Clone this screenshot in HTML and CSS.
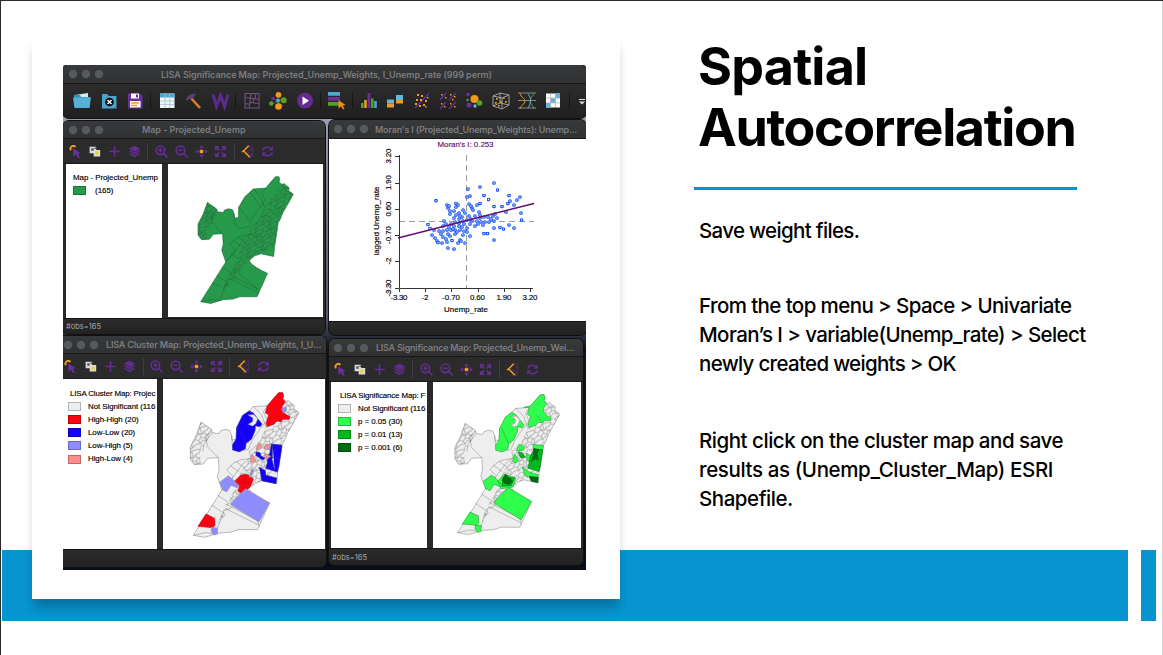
FILE: index.html
```html
<!DOCTYPE html>
<html lang="en">
<head>
<meta charset="utf-8">
<title>Spatial Autocorrelation</title>
<link rel="stylesheet" href="styles.css">
</head>
<body>
<svg class="defs" width="0" height="0" aria-hidden="true">
  <defs>
    <pattern id="tracts" width="46" height="42" patternUnits="userSpaceOnUse" patternTransform="rotate(-28) scale(1.2)">
      <path class="mesh" d="M0 5l9 3 7-6 8 5 10-4 12 2M0 16l7-3 8 5 9-4 7 6 8-5 7 1M0 27l10-3 6 6 9-4 8 5 6-6 7 2M0 37l8-2 9 4 8-5 9 5 12-2M9 8l-2 5M24 7l0 7M34 3l-3 13 2 4M15 18l-5 6M24 14l3 8-2 4M16 30l1 9M33 31l1 8M39 25l-1-9M43 27l-3 11"/>
    </pattern>
    <path id="outline" d="M296 38L308 38 311 48 308 56 318 64 326 62 335 70 343 76 341 86 357 98 345 120 322 160 312 185 305 196 303 215 296 260 293 276 290 311 265 306 245 302 222 310 206 326 215 338 231 349 250 360 269 369 233 449 174 449 151 457 117 459 74 472 40 466 126 330 112 290 117 269 115 233 83 235 70 252 43 254 31 238 31 200 49 166 63 126 95 149 97 158 117 161 122 152 135 148 149 151 155 166 156 180 169 178 170 143 191 107 220 80 263 77 282 54Z"/>
    <g id="borders">
      <path stroke="none" fill="url(#tracts)" d="M318 64L343 76 341 86 357 98 322 160 305 196 293 276 245 302 200 330 120 425 108 462 120 410 165 325 180 280 210 235 235 190 258 142 300 90Z"/>
      <path stroke="none" fill="url(#tracts)" d="M63 126L95 149 80 185 60 215 62 252 43 254 31 238 31 200 49 166Z"/>
      <path class="mesh" d="M160 290L126 330M142 300L170 320M95 375L126 396M112 345L145 367M78 402L108 415M126 330L160 290 190 250 212 232M150 352L232 420 237 440M137 372L236 423M135 385L234 434M130 396L120 425 105 462 76 458 40 466M160 290L140 270 160 250 180 240 215 235M150 256L178 276M168 244L194 264M155 166L158 205 175 215 205 208 218 178 245 140 210 92M170 143L195 170 206 190M220 80L245 105 258 142M263 77L250 95 262 120 245 140M95 149L78 170 82 200 115 233M97 158L72 192 68 215M235 192L208 215 212 232"/>
    </g>
    <marker id="ring" markerWidth="4" markerHeight="4" refX="2" refY="2" markerUnits="userSpaceOnUse">
      <circle cx="2" cy="2" r="1.3" fill="#fff" stroke="#0a4cf5" stroke-width="1.1"/>
    </marker>

    <symbol id="select" viewBox="0 0 16 16"><path fill="none" stroke="#f29a1d" stroke-width="2.2" d="M2.500 6.500A3.400 3.400 0 0 1 8 2.500"/><path fill="#6a309c" d="M5 4L14.500 10 10.800 10.700 13.500 15 11.300 16 8.700 11.800 5.500 14.500Z"/></symbol>
    <symbol id="invert" viewBox="0 0 16 16"><path fill="#ddd" d="M2 2h8v8H2zM7 6h8v8H7z"/><path fill="#555" d="M4 4h3v3H4zM8 3h2v2H8z"/><path fill="#e8d52b" d="M9 8h4v4H9z"/></symbol>
    <symbol id="plus" viewBox="0 0 16 16"><path stroke="#642c95" stroke-width="2" d="M8 1.500v13M1.500 8h13"/></symbol>
    <symbol id="layers" viewBox="0 0 16 16"><g fill="#642c95"><path d="M8 1l7 3.600-7 3.600-7-3.600z"/><path d="M1 7.300l2-.8 5 2.800 5-2.800 2 .8-7 4z"/><path d="M1 10.700l2-.8 5 2.800 5-2.800 2 .8-7 4z"/></g></symbol>
    <symbol id="zoomin" viewBox="0 0 16 16"><g fill="none" stroke="#642c95" stroke-width="2"><circle cx="6.700" cy="6.500" r="5.300"/><path d="M10.400 10.200l5 5M4 6.500h5.400M6.700 3.800v5.400"/></g></symbol>
    <symbol id="zoomout" viewBox="0 0 16 16"><g fill="none" stroke="#642c95" stroke-width="2"><circle cx="6.700" cy="6.500" r="5.300"/><path d="M10.400 10.200l5 5M4 6.500h5.400"/></g></symbol>
    <symbol id="pan" viewBox="0 0 16 16"><path fill="#642c95" d="M8 0l3 4H5zM8 16l3-4H5zM0 8l4-3v6zM16 8l-4-3v6z"/><circle cx="8" cy="8" r="2.400" fill="#f29a1d"/></symbol>
    <symbol id="extent" viewBox="0 0 16 16"><path fill="none" stroke="#642c95" stroke-width="1.900" d="M2 6V2.300H6M10 2.300h4V6M14 10v3.700h-4M6 13.700H2V10M2.500 3l4 3.600M13.500 3l-4 3.600M2.500 13l4-3.600M13.500 13l-4-3.600"/></symbol>
    <symbol id="basemap" viewBox="0 0 16 16"><path fill="none" stroke="#54306e" stroke-width=".9" d="M7 1h7v14H7M5 5l9 9M8 1l6 6M14 4l-8 8M14 10l-4 5M10 1L6 5"/><path fill="none" stroke="#f29a1d" stroke-width="1.900" d="M9.500 1L2.500 8H1M3 7l8 8"/></symbol>
    <symbol id="refresh" viewBox="0 0 16 16"><path fill="none" stroke="#642c95" stroke-width="1.900" d="M2 7A6 5.300 0 0 1 12.500 4.700M14 9A6 5.300 0 0 1 3.500 11.300"/><path fill="#642c95" d="M14.700 1.500v5.200H9.500zM1.300 14.500V9.300h5.200z"/></symbol>
    <symbol id="lights" viewBox="0 0 36 10"><g fill="#58595b"><circle cx="5" cy="5" r="4.200"/><circle cx="18" cy="5" r="4.200"/><circle cx="31" cy="5" r="4.200"/></g></symbol>
  </defs>
</svg>

<main class="slide">
  <div class="band"></div>
  <div class="band-end"></div>

  <figure class="card">
    <div class="desktop">
      <section class="win main">
        <header class="titlebar"><svg class="lights"><use href="#lights"/></svg><span class="t-main">LISA Significance Map: Projected_Unemp_Weights, I_Unemp_rate (999 perm)</span></header>
        <div class="bigbar">
          <svg viewBox="0 0 20 20"><path fill="#dbe9ee" d="M3 4l13-2v5H3z"/><path fill="#3c90b8" d="M2 4h6l1 2h9v3H2z"/><path fill="#56b0d8" d="M1 6.500h18L17.500 17H2.500z"/></svg>
          <svg viewBox="0 0 20 20"><path fill="#4aa3cc" d="M3 3h5l2 2h7.500v12.500H3z"/><circle cx="10.500" cy="11" r="4.300" fill="#080808"/><path stroke="#fff" stroke-width="1.500" d="M8.500 9l4 4M12.500 9l-4 4"/></svg>
          <svg viewBox="0 0 20 20"><path fill="#6a2f9b" d="M3 2.500h12l2.500 2.500v12.500H3z"/><path fill="#fff" d="M6 2.500h8v5H6zM5 10h10.500v6.500H5z"/><path fill="#6a2f9b" d="M11 3.500h2v3h-2z"/><path stroke="#f29a1d" stroke-width="1.400" d="M6 12h8M6 14.500h6"/></svg>
          <i></i>
          <svg viewBox="0 0 20 20"><path fill="#f4f4f4" d="M3 2.500h14.500V17H3z"/><path fill="#4aa9d3" d="M3 2.500h14.500v4H3z"/><path stroke="#9fc9d6" stroke-width=".8" d="M3 10h14.500M3 13.500h14.500M8 2.500V17M12.800 2.500V17"/></svg>
          <svg viewBox="0 0 20 20"><path stroke="#dd7b2a" stroke-width="2.600" d="M8 7l9 10"/><path fill="#5c3f78" d="M3 9c1-4 5-7 10-6l-3 4-2 1-1-1-3 3z"/></svg>
          <svg viewBox="0 0 20 20"><path fill="none" stroke="#5c2a8c" stroke-width="3" d="M3 3.500l3.500 12L10.500 4.500l4 11 3.500-12"/></svg>
          <i></i>
          <svg viewBox="0 0 20 20"><path fill="none" stroke="#6c5380" stroke-width="1.100" d="M3 2.500h14V17H3zM3 6.500l14 2M9 2.500L7 17M8 11.500l9 1M12 7.500l-1 5M14 2.500l-1 5M3 12.500l5 1"/></svg>
          <svg viewBox="0 0 20 20"><path stroke="#6a5a50" d="M10 4v12M4 13l12-6M5 7l10 8"/><circle cx="10.500" cy="3.800" r="2.900" fill="#f29a1d"/><circle cx="10.500" cy="15.500" r="3.300" fill="#f29a1d"/><circle cx="15.700" cy="9.300" r="3" fill="#55a51c"/><circle cx="3.300" cy="12.500" r="2.200" fill="#55a51c"/><circle cx="5" cy="7.500" r="1.800" fill="#6a2f9b"/><circle cx="10" cy="9.500" r="1.900" fill="#4aa9d3"/></svg>
          <svg viewBox="0 0 20 20"><circle cx="10" cy="9.700" r="7.900" fill="#642c91"/><path fill="#fff" d="M7.500 5.500l6.500 4.200-6.500 4.200z"/></svg>
          <i></i>
          <svg viewBox="0 0 20 20"><path fill="#4aa9d3" d="M1 1h12v3.800H1z"/><path fill="#6a2f9b" d="M1 6h12v3.800H1z"/><path fill="#55a51c" d="M1 11h12v3.800H1z"/><path fill="#ef8b23" d="M11.500 9l7 5-2.800.7 1.800 3-1.500.8-1.800-3-2.700 2z"/></svg>
          <i></i>
          <svg viewBox="0 0 20 20"><path fill="#55a51c" d="M2 12h2.600v5H2zM12 7.500h2.600V17H12z"/><path fill="#ef9a23" d="M5.200 9h2.600v8H5.200z"/><path fill="#6a2f9b" d="M8.600 2h2.800v15H8.600z"/><path fill="#4aa9d3" d="M15.200 10h2.600v7h-2.600z"/></svg>
          <svg viewBox="0 0 20 20"><path fill="#61b7dc" d="M2 8.500h7v4H2zM11 4h7v5h-7z"/><path fill="#f29a1d" d="M2 12.500h7v4H2zM11 9h7v3.500h-7z"/></svg>
          <svg viewBox="0 0 20 20"><path stroke="#6a2f9b" stroke-width="1.300" d="M4 17L18 2.500"/><path fill="#f29a1d" d="M6 3h2v2H6zM10 4h2v2h-2zM5 8h2v2H5zM9 8h2v2H9zM14 9h2v2h-2zM12 13h2v2h-2zM8 14h2v2H8zM4 12h2v2H4zM16 6h1.500v1.500H16zM14 15h1.500v1.500H14z"/></svg>
          <svg viewBox="0 0 20 20"><path stroke="#6a2f9b" stroke-width="1.300" d="M2 9l6-7M11 9l7-7M2 18l6-7M11 18l7-7"/><path fill="#f29a1d" d="M3 3h1.500v1.500H3zM7 6h1.500v1.500H7zM12 3h1.500v1.500H12zM16 5h1.500v1.500H16zM14 8h1.500v1.500H14zM3 12h1.500v1.500H3zM6 15h1.500v1.500H6zM12 12h1.500v1.500H12zM16 15h1.500v1.500H16z"/></svg>
          <svg viewBox="0 0 20 20"><circle cx="4" cy="3.500" r="1.700" fill="#6a2f9b"/><circle cx="3.500" cy="9" r="1.200" fill="#55a51c"/><circle cx="10.500" cy="8" r="4" fill="#f29a1d"/><circle cx="5" cy="14" r="2.600" fill="#6a2f9b"/><circle cx="15.500" cy="12" r="2.800" fill="#55a51c"/><circle cx="11" cy="15" r="1.700" fill="#61b7dc"/></svg>
          <svg viewBox="0 0 20 20"><path fill="none" stroke="#aaa" stroke-width=".9" d="M2 5l7-3 9 2v10l-7 4-9-3zM2 5l9 2 7-3M11 7v11M9 2v10l-7 3M9 12l9 2"/><path fill="#f29a1d" d="M5 7h1.700v1.700H5zM12 6h1.700v1.700H12zM4 11h1.700v1.700H4zM9 10h1.700v1.700H9zM14 10h1.700v1.700H14zM7 14h1.700v1.700H7z"/></svg>
          <svg viewBox="0 0 20 20"><path fill="none" stroke="#f29a1d" d="M3 2c1 5 5 5 5 8s-4 4-5 8"/><path fill="none" stroke="#55a51c" d="M17 2c-2 5-4 5-4 8s3 4 4 8"/><path fill="none" stroke="#61b7dc" d="M11 3c4 5 3 9 0 14"/><path stroke="#888" d="M1 2h18M1 9.500h18M1 17h18"/></svg>
          <svg viewBox="0 0 20 20"><path fill="#fff" d="M3 2.500h14v14H3z"/><path fill="#61b7dc" d="M12.500 2.500H17V7h-4.500zM7.700 7.200h4.600v4.600H7.700zM3 12h4.500v4.500H3z"/><path stroke="#aaa" stroke-width=".7" d="M7.600 2.500v14M12.400 2.500v14M3 7.100h14M3 11.900h14"/></svg>
          <i></i>
          <svg class="more" viewBox="0 0 20 20"><path fill="#ddd" d="M7 8h6v1H7zM7 10.500h6L10 13.500z"/></svg>
        </div>
      </section>

      <section class="win map">
        <header class="titlebar"><svg class="lights"><use href="#lights"/></svg><span class="t-map">Map - Projected_Unemp</span></header>
        <div class="toolbar"><svg><use href="#select"/></svg><svg><use href="#invert"/></svg><svg><use href="#plus"/></svg><svg><use href="#layers"/></svg><i></i><svg><use href="#zoomin"/></svg><svg><use href="#zoomout"/></svg><svg><use href="#pan"/></svg><svg><use href="#extent"/></svg><i></i><svg><use href="#basemap"/></svg><svg><use href="#refresh"/></svg></div>
        <div class="panes">
          <div class="legend"><h2>Map - Projected_Unemp</h2><p><b class="sw green"></b>(165)</p></div>
          <svg class="view map-green" viewBox="168 165 155 153"><g transform="translate(189 166.600) scale(.292)"><use href="#outline"/><use href="#borders"/></g></svg>
        </div>
        <footer>#obs=165</footer>
      </section>

      <section class="win moran">
        <header class="titlebar"><svg class="lights"><use href="#lights"/></svg><span class="t-moran">Moran's I (Projected_Unemp_Weights): Unemp...</span></header>
        <svg class="plot" viewBox="0 0 257 182">
          <g transform="translate(-329 -139)">
            <path class="dash" d="M466.500 155V288M399 221.500H534"/>
            <path fill="none" marker-start="url(#ring)" marker-mid="url(#ring)" marker-end="url(#ring)" d="M436 200.700L468 189 480 187 494 183 497.500 190 484 195.500 488.500 199.500 509 195.500 520 197 517 200 510 201 508 203.500 514 205 494 206.500 502 206.500 506 212 521 213 521.500 220 509 225 514 228 500 227.500 503.500 229 494 228 494 240 484 233.500 487.500 233.500 470 196 467 197 447 205 448 208 450 211 456 203.500 456 207 458 205 469 204 472 208 473 210 477 205 480 203.500 428 224.500 430 228.500 434 230 432 235 435 238 437 241 438 242.500 442 243 448 248 454 249 452 240.500 458 243 460 240 465 243 470 236 443 237 441 234 439 231 443 231 447 230 451 230 455 230 460 230 464 231 467 228 475 226 478 224 481 222 485 222 489 222 491 219 494 221 493 216 488 217 484 217 480 218 477 221 472 221 470 224 467 220 463 221 459 219 455 222 451 224 446 224 444 221 443 226 449 227 454 226 459 226 464 224 456 215 459 213 463 210 465 213 469 216 462 217 454 211 450 214 479 212 480 215 475 216 471 219 497 218 446 239 450 236 455 234 463 235 467 232 459 223 454 218 495 214 449 206 460 216 453 229 457 232 448 234 462 227 483 225 471 206 461 241 447 242"/>
            <path stroke="#650d70" stroke-width="1.400" d="M398 238L534 203.500"/>
            <path fill="none" stroke="#333" d="M399.500 155V288.500H533M395 156.500h4M395 183.500h4M395 209.500h4M395 235.500h4M395 261.500h4M395 288.500h4M399.500 289v3M425.500 289v3M451.500 289v3M478.500 289v3M504.500 289v3M530.500 289v3"/>
            <g class="axis">
              <text x="399" y="300" textLength="17">-3.30</text><text x="425" y="300">-2</text><text x="451" y="300" textLength="18">-0.70</text><text x="477.500" y="300" textLength="15">0.60</text><text x="504" y="300" textLength="15">1.90</text><text x="530" y="300" textLength="15">3.20</text>
              <text x="466" y="312" textLength="44">Unemp_rate</text>
              <text class="stat" x="465.500" y="147" textLength="56">Moran's I: 0.253</text>
              <text transform="translate(391 156) rotate(-90)" textLength="15">3.20</text><text transform="translate(391 182.500) rotate(-90)" textLength="15">1.90</text><text transform="translate(391 209) rotate(-90)" textLength="15">0.60</text><text transform="translate(391 235) rotate(-90)" textLength="18">-0.70</text><text transform="translate(391 261) rotate(-90)">-2</text><text transform="translate(391 288) rotate(-90)" textLength="17">-3.30</text>
              <text transform="translate(379 221) rotate(-90)" textLength="69">lagged Unemp_rate</text>
            </g>
          </g>
        </svg>
        <footer></footer>
      </section>

      <section class="win cluster">
        <header class="titlebar"><svg class="lights"><use href="#lights"/></svg><span class="t-cluster">LISA Cluster Map: Projected_Unemp_Weights, I_U...</span></header>
        <div class="toolbar"><svg><use href="#select"/></svg><svg><use href="#invert"/></svg><svg><use href="#plus"/></svg><svg><use href="#layers"/></svg><i></i><svg><use href="#zoomin"/></svg><svg><use href="#zoomout"/></svg><svg><use href="#pan"/></svg><svg><use href="#extent"/></svg><i></i><svg><use href="#basemap"/></svg><svg><use href="#refresh"/></svg></div>
        <div class="panes">
          <div class="legend"><h2>LISA Cluster Map: Projec</h2><p><b class="sw none"></b>Not Significant (116</p><p><b class="sw hh"></b>High-High (20)</p><p><b class="sw ll"></b>Low-Low (20)</p><p><b class="sw lh"></b>Low-High (5)</p><p><b class="sw hl"></b>High-Low (4)</p></div>
          <svg class="view map-grey" viewBox="163 379 162 170"><g transform="translate(180 380) scale(.3333)"><use href="#outline"/>
            <use href="#borders"/>
            <path fill="#ff0010" stroke="#b8101a" d="M296 38L308 38 311 48 308 56 316 66 306 80 308 92 318 104 330 110 327 118 308 118 304 125 290 123 283 132 262 140 258 132 266 105 256 98 262 77 282 54ZM183 285L200 283 220 296 212 318 190 342 174 334 179 318 160 307ZM78 402L104 416 105 436 98 443 54 439ZM285 100L304 125M180 305L212 312M196 286L190 340"/>
            <path fill="#1500fa" stroke="#2a25a8" d="M208 93L220 99 232 115 246 132 240 140 226 137 225 152 214 178 198 190 196 206 178 215 158 210 158 194 168 178 170 143 188 106ZM176 140L198 190"/>
            <path fill="#eee" d="M205 105L222 104 233 116 228 130 218 138 205 133 218 125 219 114Z"/>
            <path fill="#1500fa" stroke="#2a25a8" d="M274 192L306 196 303 218 296 262 292 276 257 265 262 250 262 230 270 218ZM238 262L256 272 257 286 290 294 288 311 245 302 242 280ZM228 216L240 218 243 228 256 235 248 240 228 226ZM264 230L300 236M278 194L276 240 284 270"/>
            <path fill="#8f8cff" d="M197 326L269 369 237 426 152 374 160 362ZM119 307L145 287 160 299 178 318 173 324 153 316 140 336 128 330ZM305 86L318 80 320 92 310 100ZM94 442L113 444 112 462 103 465 94 457ZM214 267L222 268 218 283 209 294Z"/>
            <path fill="#ff8c8c" d="M236 187L248 199 235 209 228 208ZM257 193L271 194 268 208 252 207ZM216 221L228 240 221 249 210 246ZM256 220L272 229 262 237 254 231Z"/>
            </g></svg>
        </div>
        <footer></footer>
      </section>

      <section class="win sig">
        <header class="titlebar"><svg class="lights"><use href="#lights"/></svg><span class="t-sig">LISA Significance Map: Projected_Unemp_Wei...</span></header>
        <div class="toolbar"><svg><use href="#select"/></svg><svg><use href="#invert"/></svg><svg><use href="#plus"/></svg><svg><use href="#layers"/></svg><i></i><svg><use href="#zoomin"/></svg><svg><use href="#zoomout"/></svg><svg><use href="#pan"/></svg><svg><use href="#extent"/></svg><i></i><svg><use href="#basemap"/></svg><svg><use href="#refresh"/></svg></div>
        <div class="panes">
          <div class="legend"><h2>LISA Significance Map: F</h2><p><b class="sw none"></b>Not Significant (116</p><p><b class="sw p05"></b>p = 0.05 (30)</p><p><b class="sw p01"></b>p = 0.01 (13)</p><p><b class="sw p001"></b>p = 0.001 (6)</p></div>
          <svg class="view map-grey" viewBox="433 382 148 166"><g transform="translate(444.900 382.600) scale(.322)"><use href="#outline"/>
            <use href="#borders"/>
            <path fill="#2fff4c" stroke="#25a83a" d="M296 38L308 38 311 48 308 56 316 66 306 80 308 92 318 104 330 110 327 118 308 118 304 125 290 123 283 132 262 140 258 132 266 105 256 98 262 77 245 77 265 72 282 54ZM208 93L220 99 232 115 246 132 240 140 226 137 225 152 214 178 198 190 196 206 178 215 158 210 158 194 168 178 170 143 188 106ZM176 140L198 190M285 100L304 125"/>
            <path fill="#eee" d="M205 105L222 104 233 116 228 130 218 138 205 133 218 125 219 114Z"/>
            <path fill="#2fff4c" stroke="#25a83a" d="M197 326L269 369 237 426 152 374 160 362ZM119 307L145 287 160 299 178 318 173 324 153 316 140 336 128 330ZM78 402L104 416 105 436 98 443 54 439ZM94 442L113 444 112 462 103 465 94 457ZM274 192L306 196 304 208 276 212ZM230 192L248 199 244 210 222 212ZM216 221L228 240 221 249 210 246ZM240 262L262 278 290 286 288 295 255 292 248 285ZM254 220L270 230 266 250 254 240ZM183 285L220 296 212 324 174 330 165 305Z"/>
            <path fill="#00b81c" stroke="#0b7a1c" d="M278 207L304 208 296 262 292 276 257 265 262 250 264 232ZM180 294L216 296 206 320 178 322ZM228 216L240 218 250 232 236 234Z"/>
            <path fill="#006c10" stroke="#00560c" d="M188 284L202 298 210 306 200 316 186 312 178 304ZM262 292L290 294 288 311 268 306ZM276 205L292 208 286 222 290 240 280 236 268 246 276 225Z"/>
            </g></svg>
        </div>
        <footer>#obs=165</footer>
      </section>
    </div>
  </figure>

  <article class="copy">
    <h1><span class="h-a">Spatial</span><br><span class="h-b">Autocorrelation</span></h1>
    <hr>
    <p><span class="l1">Save weight files.</span></p>
    <p><span class="l2">From the top menu &gt; Space &gt; Univariate</span><br><span class="l3">Moran’s I &gt; variable(Unemp_rate) &gt; Select</span><br><span class="l4">newly created weights &gt; OK</span></p>
    <p><span class="l5">Right click on the cluster map and save</span><br><span class="l6">results as (Unemp_Cluster_Map) ESRI</span><br><span class="l7">Shapefile.</span></p>
  </article>
</main>
</body>
</html>
```
FILE: styles.css
```css
* { box-sizing: border-box; }
body { margin: 0; background: #fff; color: #000; }
.defs { position: absolute; }
.slide {
  position: relative; width: 1163px; height: 655px; overflow: hidden;
  border-top: 1px solid #2a2a2a; border-left: 1px solid #2a2a2a;
  display: flex; align-items: flex-start; background: #fff;
}
.slide::after { content: ""; position: absolute; right: 0; top: 0; width: 1px; height: 655px; background: #d4d4d4; }
/* decorative band behind the card */
.band, .band-end { position: absolute; top: 549px; height: 71px; background: #0894d0; }
.band { left: 1px; width: 1126px; }
.band-end { left: 1140px; width: 15px; }

.card {
  position: relative; flex: none; width: 588px; height: 562px; margin: 36px 0 0 31px; padding: 28px 31px 29px;
  background: #fff; box-shadow: 0 12px 9px -3px rgba(0,0,0,.16), 0 7px 9px 0 rgba(0,0,0,.08);
}
.desktop {
  position: relative; width: 523px; height: 505px; overflow: hidden;
  background: linear-gradient(#aeb0c6 0, #72748a 30%, #555968 50%, #10131f 56%, #080d18 100%);
  font-family: Inter, "Liberation Sans", sans-serif;
}

/* windows */
.win {
  position: absolute; display: flex; flex-direction: column; overflow: hidden;
  background: #2a2a2b; border-radius: 6px; box-shadow: 0 0 0 1px #111, inset 0 1px #505154;
}
.main { left: 0; top: 0; width: 523px; height: 53px; }
.map { left: 0; top: 56px; width: 262px; height: 213px; }
.moran { left: 266px; top: 55px; width: 257px; height: 215px; }
.cluster { left: -5px; top: 271px; width: 268px; height: 231px; }
.sig { left: 266px; top: 274px; width: 254px; height: 226px; }

.titlebar {
  flex: none; height: 18px; display: flex; align-items: center; border-bottom: 1px solid #171717;
  background: linear-gradient(#38393b, #303133); color: #7b7c7e; font-size: 9px; font-weight: 600; white-space: nowrap;
}
.main .titlebar, .moran .titlebar { height: 19px; }
.lights { width: 36px; height: 10px; margin-left: 5px; flex: none; }
.moran .lights, .sig .lights { margin-left: 4px; }
.t-main { margin-left: 57px; letter-spacing: -.055px; }
.t-map { margin-left: 38px; letter-spacing: -.05px; }
.t-moran { margin-left: 6px; letter-spacing: -.2px; }
.t-cluster { margin-left: 7px; letter-spacing: -.16px; }
.t-sig { margin-left: 7px; letter-spacing: -.24px; }

.bigbar { flex: 1; display: flex; align-items: center; padding-left: 6px; background: linear-gradient(#2c2c2d, #202021); }
.bigbar svg { flex: none; width: 20px; height: 20px; margin: 0 3.200px; }
.bigbar i { flex: none; width: 1px; height: 16px; margin: 0 2.350px; background: #161616; }
.bigbar .more { margin-left: 0; }

.toolbar { flex: none; height: 25px; display: flex; align-items: center; padding-left: 2.200px; background: #2b2b2c; border-bottom: 1px solid #1b1b1b; }
.toolbar svg { flex: none; width: 13px; height: 13px; margin: 0 3.400px; }
.toolbar i { flex: none; width: 1px; height: 17px; margin: 0 3.150px; background: #404042; }
.moran .plot { display: block; flex: none; width: 257px; height: 182px; background: #fff; }
.sig .toolbar { padding-left: 1.200px; }
.cluster .toolbar { padding-left: 2.600px; }

.panes { display: flex; gap: 6px; flex: none; }
.legend {
  flex: none; overflow: hidden; background: #fff; white-space: nowrap;
  font: 7.900px/13.100px "Liberation Sans", Arial, sans-serif; -webkit-text-stroke: .15px #000;
}
.legend h2 { margin: 0; font-size: inherit; font-weight: 400; letter-spacing: -.03px; }
.legend p { display: flex; align-items: center; margin: 0; height: 13.100px; }
.sw { flex: none; width: 13px; height: 9px; margin-right: 7px; border: 1px solid rgba(0,0,0,.25); }
.map .panes { height: 154px; padding-left: 3px; }
.map .legend { width: 96px; padding: 7px 0 0 7px; }
.map .sw { margin-right: 9px; }
.map .view { width: 155px; height: 153px; }
.cluster .panes { height: 170px; }
.cluster .legend { width: 99px; padding: 8px 0 0 10px; }
.cluster h2, .sig h2 { margin-left: 2px; letter-spacing: -.12px; }
.cluster .legend p, .sig .legend p { letter-spacing: -.05px; }
.cluster .view { width: 162px; height: 170px; }
.sig .panes { height: 166px; padding-left: 2px; }
.sig .legend { width: 96px; padding: 7px 0 0 7px; }
.sig .view { width: 148px; height: 166px; }
.view { flex: none; background: #fff; }

.green { background: #26994a; }
.none { background: #eee; }
.hh { background: #ff0010; }
.ll { background: #1500fa; }
.lh { background: #8f8cff; }
.hl { background: #ff8c8c; }
.p05 { background: #2fff4c; }
.p01 { background: #00b81c; }
.p001 { background: #006c10; }

.mesh { fill: none; stroke: #2a332c; stroke-width: 2; stroke-opacity: .42; }
.map-green { fill: #26994a; stroke: #15672f; stroke-width: 2; }
.map-grey { fill: #eee; stroke: #999; stroke-width: 2; }

.win footer { flex: 1; padding-left: 3px; display: flex; align-items: center; color: #a9a9a9; font-size: 7.500px; background: linear-gradient(#2b2b2b, #222); border-top: 1px solid #141414; }

.dash { fill: none; stroke: #999; stroke-dasharray: 6 4; }
.axis { font: 7.900px "Liberation Sans", Arial, sans-serif; text-anchor: middle; stroke: #000; stroke-width: .15px; }
.axis .stat { fill: #650d70; stroke: #650d70; }

/* text column */
.copy { margin-left: 79px; font: 450 20.500px/29px Inter, "Open Sans", sans-serif; white-space: nowrap; }
.copy h1 { margin: 35px 0 0 -1px; font-size: 52px; line-height: 61px; font-weight: 700; }
.copy hr { width: 383px; height: 3px; margin: 29px 0 0 -5px; border: 0; background: #0894d0; }
.copy p { margin: 0 0 46px; }
.copy hr + p { margin-top: 26px; }
.copy p:last-child { margin-top: 48px; }
.h-a { letter-spacing: -.8px; }
.h-b { letter-spacing: -1.380px; }
.l1 { letter-spacing: -.67px; }
.l2 { letter-spacing: -.59px; }
.l3 { letter-spacing: -.6px; }
.l4 { letter-spacing: -.69px; }
.l5 { letter-spacing: -.47px; }
.l6 { letter-spacing: -.38px; }
.l7 { letter-spacing: -.45px; }
```
